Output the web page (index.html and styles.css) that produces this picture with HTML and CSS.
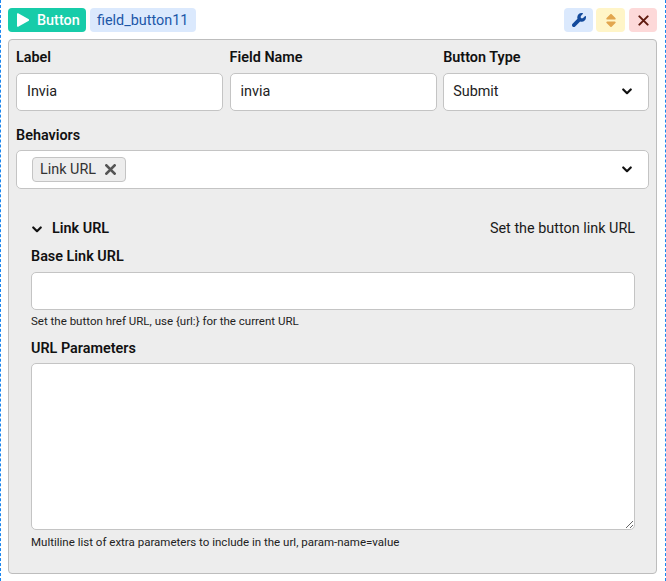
FILE: index.html
```html
<!DOCTYPE html>
<html lang="en">
<head>
  <meta charset="UTF-8">
  <meta name="viewport" content="width=device-width, initial-scale=1.0">
  <title>Button field</title>
  <link rel="stylesheet" href="styles.css">
</head>
<body>
  <div class="field-block">
    <div class="field-head">
      <span class="tag tag-type">
        <svg class="icon-play" viewBox="0 0 12 14"><path d="M1.6 0.4 11.4 6a1.2 1.2 0 0 1 0 2L1.6 13.6A1 1 0 0 1 0 12.7V1.3A1 1 0 0 1 1.6 0.4z"/></svg>
        Button
      </span>
      <span class="tag tag-name">field_button11</span>
      <div class="actions">
        <button type="button" class="action action-edit">
          <svg viewBox="0 0 512 512"><path d="M352 320c88.4 0 160-71.6 160-160c0-15.3-2.2-30.1-6.2-44.2c-3.1-10.8-16.4-13.2-24.3-5.3l-76.8 76.8c-3 3-7.1 4.7-11.3 4.7H336c-8.8 0-16-7.2-16-16V118.6c0-4.2 1.7-8.3 4.7-11.3l76.8-76.8c7.9-7.9 5.4-21.2-5.3-24.3C382.1 2.2 367.3 0 352 0C263.6 0 192 71.6 192 160c0 19.1 3.4 37.5 9.5 54.5L19.9 396.1C7.2 408.8 0 426.1 0 444.1C0 481.6 30.4 512 67.9 512c18 0 35.3-7.2 48-19.9L297.5 310.5c17 6.2 35.4 9.5 54.5 9.5z"/></svg>
        </button>
        <button type="button" class="action action-move">
          <svg viewBox="0 0 320 512"><path d="M137.4 41.4c12.5-12.5 32.8-12.5 45.3 0l128 128c9.2 9.2 11.9 22.9 6.9 34.9s-16.6 19.8-29.6 19.8H32c-12.9 0-24.6-7.8-29.6-19.8s-2.2-25.7 6.9-34.9l128-128zm0 429.3l-128-128c-9.2-9.2-11.9-22.9-6.9-34.9s16.6-19.8 29.6-19.8H288c12.9 0 24.6 7.8 29.6 19.8s2.2 25.7-6.9 34.9l-128 128c-12.5 12.5-32.8 12.5-45.3 0z"/></svg>
        </button>
        <button type="button" class="action action-remove">
          <svg viewBox="0 0 12 12"><path d="M1.5 1.5l9 9M10.5 1.5l-9 9"/></svg>
        </button>
      </div>
    </div>

    <div class="panel">
      <div class="row-three">
        <div class="field">
          <label class="field-label">Label</label>
          <input type="text" class="input" value="Invia">
        </div>
        <div class="field">
          <label class="field-label">Field Name</label>
          <input type="text" class="input" value="invia">
        </div>
        <div class="field">
          <label class="field-label">Button Type</label>
          <div class="select-box">
            <span>Submit</span>
            <svg class="chevron" viewBox="0 0 12 8"><path d="M1.5 1.5 6 6l4.5-4.5"/></svg>
          </div>
        </div>
      </div>

      <div class="field behaviors">
        <label class="field-label">Behaviors</label>
        <div class="select-box select-multi">
          <span class="chip">Link URL
            <svg viewBox="0 0 12 12"><path d="M1.5 1.5l9 9M10.5 1.5l-9 9"/></svg>
          </span>
          <svg class="chevron" viewBox="0 0 12 8"><path d="M1.5 1.5 6 6l4.5-4.5"/></svg>
        </div>
      </div>

      <div class="section">
        <div class="section-head">
          <span class="section-title">
            <svg class="chevron" viewBox="0 0 12 8"><path d="M1.5 1.5 6 6l4.5-4.5"/></svg>
            Link URL
          </span>
          <span>Set the button link URL</span>
        </div>

        <div class="field">
          <label class="field-label">Base Link URL</label>
          <input type="text" class="input">
          <div class="help">Set the button href URL, use {url:} for the current URL</div>
        </div>

        <div class="field params">
          <label class="field-label">URL Parameters</label>
          <textarea class="input textarea"></textarea>
          <div class="help">Multiline list of extra parameters to include in the url, param-name=value</div>
        </div>
      </div>
    </div>
  </div>
</body>
</html>
```

FILE: styles.css
```css
* {
  margin: 0;
  padding: 0;
  box-sizing: border-box;
}

body {
  font-family: Roboto, 'Liberation Sans', sans-serif;
  font-size: 14.4px;
  color: #1a1a1a;
  background: white;
}

.field-block {
  border-left: 1px dashed #1a86f0;
  border-right: 1px dashed #1a86f0;
  padding: 8px 8px 8px 7px;
  height: 581px;
}

.field-head {
  display: flex;
  align-items: center;
  gap: 4px;
  height: 24px;
  margin-bottom: 7px;
}

.tag {
  display: flex;
  align-items: center;
  height: 24px;
  border-radius: 4px;
  padding: 0 7px;
}

.tag-type {
  width: 78px;
  background: #17cca9;
  color: white;
  font-weight: 500;
  gap: 8px;
  padding: 0 0 0 8px;
}

.icon-play {
  flex-shrink: 0;
  width: 12px;
  height: 14px;
  margin-left: 1px;
  fill: white;
}

.tag-name {
  width: 106px;
  background: #dbe9fd;
  color: #1c57a8;
}

.actions {
  display: flex;
  gap: 3px;
  margin-left: auto;
}

.action {
  display: flex;
  align-items: center;
  justify-content: center;
  width: 29px;
  height: 24px;
  border: none;
  border-radius: 4px;
}

.action svg {
  height: 14px;
  width: 14px;
}

.action-edit {
  background: #dbe9fd;
  fill: #134a9c;
}

.action-move {
  background: #fff5c8;
  fill: #e2a64e;
}

.action-move svg {
  height: 15px;
}

.action-remove {
  width: 28px;
  margin-left: 1px;
  background: #fdd9d9;
}

.action-remove svg {
  width: 11px;
  height: 11px;
  fill: none;
  stroke: #5f1a0e;
  stroke-width: 2.2;
  stroke-linecap: round;
}

.panel {
  height: 535px;
  padding: 9px 7px 8px;
  background: #ededed;
  border: 1px solid #bdbdbd;
  border-radius: 4px;
}

.row-three {
  display: grid;
  grid-template-columns: 207px 207px 206px;
  gap: 6.6px;
}

.field-label {
  display: block;
  font-weight: 600;
  line-height: 18px;
  margin-bottom: 6px;
  color: #111;
}

.input {
  display: block;
  width: 100%;
  height: 38px;
  padding: 0 10px 2px;
  background: white;
  border: 1px solid #c4c4c4;
  border-radius: 5px;
  font-family: inherit;
  font-size: 14.4px;
  color: #222;
  outline: none;
}

.select-box {
  display: flex;
  align-items: center;
  justify-content: space-between;
  height: 38px;
  padding: 0 16px 2px 9px;
  background: white;
  border: 1px solid #c4c4c4;
  border-radius: 5px;
  color: #222;
}

.chevron {
  width: 10px;
  height: 7px;
  fill: none;
  stroke: #111;
  stroke-width: 2.6;
  stroke-linecap: round;
  stroke-linejoin: round;
}

.behaviors {
  margin-top: 16px;
}

.behaviors .field-label {
  margin-bottom: 5px;
}

.select-multi {
  height: 39px;
  padding: 0 16px 0 15px;
}

.chip {
  display: flex;
  align-items: center;
  gap: 9px;
  height: 25px;
  padding: 0 9px 0 7px;
  background: #ededed;
  border: 1px solid #c4c4c4;
  border-radius: 4px;
  color: #333;
}

.chip svg {
  width: 11px;
  height: 11px;
  fill: none;
  stroke: #555;
  stroke-width: 3;
  stroke-linecap: round;
}

.section {
  padding: 31px 14px 0 15px;
}

.section-head {
  display: flex;
  justify-content: space-between;
  align-items: center;
  line-height: 18px;
  margin-bottom: 10px;
}

.section-title {
  display: flex;
  align-items: center;
  gap: 10px;
  font-weight: 600;
  color: #111;
}

.section-title .chevron {
  margin-left: 1px;
}

.help {
  margin-top: 4px;
  font-size: 11.52px;
  line-height: 14px;
  color: #222;
}

.params {
  margin-top: 12px;
}

.params .field-label {
  margin-bottom: 5px;
}

.params .help {
  margin-top: 5px;
}

.textarea {
  height: 167px;
  padding: 8px 10px;
  resize: vertical;
}
```
